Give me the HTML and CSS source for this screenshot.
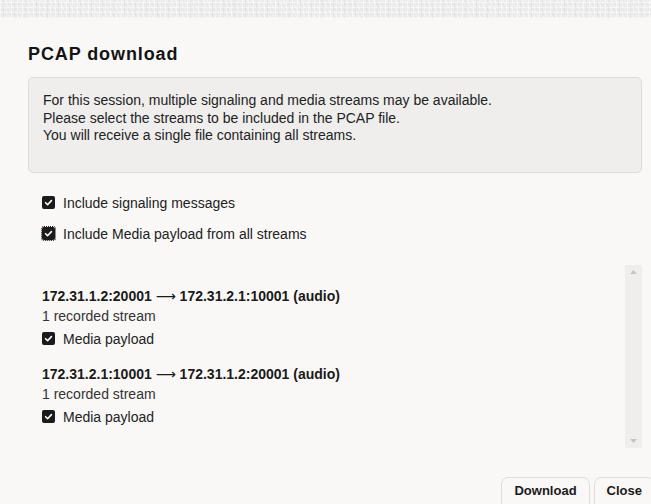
FILE: index.html
```html
<!DOCTYPE html>
<html>
<head>
<meta charset="utf-8">
<link rel="stylesheet" href="styles.css">
</head>
<body>
<div class="backdrop"></div>
<div class="dialog">
  <h1 class="title">PCAP download</h1>
  <div class="info">
    For this session, multiple signaling and media streams may be available.<br>
    Please select the streams to be included in the PCAP file.<br>
    You will receive a single file containing all streams.
  </div>
  <div class="options">
    <label class="check-row">
      <span class="box"><svg viewBox="0 0 13 13" width="13" height="13"><path d="M3.6 6.7 L5.6 8.7 L9.4 4.6" fill="none" stroke="#fff" stroke-width="1.6" stroke-linecap="round" stroke-linejoin="round"/></svg></span>
      <span class="label">Include signaling messages</span>
    </label>
    <label class="check-row">
      <span class="box focused"><svg viewBox="0 0 13 13" width="13" height="13"><path d="M3.6 6.7 L5.6 8.7 L9.4 4.6" fill="none" stroke="#fff" stroke-width="1.6" stroke-linecap="round" stroke-linejoin="round"/></svg></span>
      <span class="label">Include Media payload from all streams</span>
    </label>
  </div>
  <div class="streams">
    <div class="stream-list">
      <div class="stream">
        <div class="stream-title">172.31.1.2:20001 <span class="arrow">⟶</span> 172.31.2.1:10001 (audio)</div>
        <div class="stream-sub">1 recorded stream</div>
        <label class="check-row small">
          <span class="box"><svg viewBox="0 0 13 13" width="13" height="13"><path d="M3.6 6.7 L5.6 8.7 L9.4 4.6" fill="none" stroke="#fff" stroke-width="1.6" stroke-linecap="round" stroke-linejoin="round"/></svg></span>
          <span class="label">Media payload</span>
        </label>
      </div>
      <div class="stream">
        <div class="stream-title">172.31.2.1:10001 <span class="arrow">⟶</span> 172.31.1.2:20001 (audio)</div>
        <div class="stream-sub">1 recorded stream</div>
        <label class="check-row small">
          <span class="box"><svg viewBox="0 0 13 13" width="13" height="13"><path d="M3.6 6.7 L5.6 8.7 L9.4 4.6" fill="none" stroke="#fff" stroke-width="1.6" stroke-linecap="round" stroke-linejoin="round"/></svg></span>
          <span class="label">Media payload</span>
        </label>
      </div>
    </div>
    <div class="scrollbar">
      <svg class="sb-arrow" viewBox="0 0 7 4" width="7" height="4"><polygon points="0,4 3.5,0 7,4" fill="#c4c4c4"/></svg>
      <svg class="sb-arrow" viewBox="0 0 7 4" width="7" height="4"><polygon points="0,0 7,0 3.5,4" fill="#c4c4c4"/></svg>
    </div>
  </div>
  <div class="footer">
    <button class="btn">Download</button>
    <button class="btn">Close</button>
  </div>
</div>
</body>
</html>
```
FILE: styles.css
```css
html, body {
  margin: 0;
  padding: 0;
  height: 100%;
  overflow: hidden;
}
body {
  font-family: "Liberation Sans", Arial, sans-serif;
  color: #1e1e1e;
  background: #f9f8f7;
}
.backdrop {
  height: 18px;
  background:
    repeating-linear-gradient(90deg, rgba(255,255,255,.5) 0 1px, transparent 1px 3px, rgba(0,0,0,.03) 3px 4px, transparent 4px 6px, rgba(255,255,255,.35) 6px 7px, transparent 7px 11px),
    repeating-linear-gradient(0deg, rgba(255,255,255,.35) 0 1px, transparent 1px 3px, rgba(0,0,0,.025) 3px 4px, transparent 4px 5px),
    repeating-linear-gradient(63deg, rgba(255,255,255,.4) 0 1px, transparent 1px 4px),
    #ebebeb;
}
.dialog {
  background: #f9f8f7;
  padding: 25px 9px 0 28px;
}
.title {
  margin: 0 0 12px;
  font-size: 18px;
  line-height: 22px;
  font-weight: bold;
  letter-spacing: 0.9px;
  color: #141414;
}
.info {
  background: #efeeed;
  border: 1px solid #dcdbda;
  border-radius: 5px;
  padding: 14px 15px 27px 14px;
  font-size: 14px;
  line-height: 17.5px;
  color: #222;
}
.options {
  padding-left: 14px;
  margin-top: 20px;
  display: flex;
  flex-direction: column;
  gap: 11px;
}
.check-row {
  display: flex;
  align-items: center;
  height: 20px;
  gap: 8px;
  font-size: 14px;
  color: #222;
}
.box {
  width: 13px;
  height: 13px;
  border-radius: 2px;
  background: #1b1b1b;
  display: flex;
}
.box.focused {
  outline: 1px dotted #222;
  outline-offset: 0;
}
.streams {
  margin-top: 21px;
  height: 183px;
  display: flex;
}
.stream-list {
  flex: 1;
  padding: 21px 0 0 14px;
  display: flex;
  flex-direction: column;
  gap: 15px;
}
.stream-title {
  font-size: 14px;
  line-height: 20px;
  font-weight: bold;
  color: #1a1a1a;
}
.arrow {
  font-weight: normal;
  font-family: "DejaVu Sans", sans-serif;
  font-size: 14px;
}
.stream-sub {
  font-size: 14px;
  line-height: 20px;
  color: #333;
}
.check-row.small {
  margin-top: 3px;
}
.scrollbar {
  width: 17px;
  background: #efeeed;
  display: flex;
  flex-direction: column;
  justify-content: space-between;
  align-items: center;
  padding: 5px 0 5px;
}
.sb-arrow {
  display: block;
}
.footer {
  margin-top: 29px;
  margin-right: -13px;
  display: flex;
  justify-content: flex-end;
  gap: 4px;
}
.btn {
  font-family: "Liberation Sans", Arial, sans-serif;
  font-size: 13px;
  font-weight: bold;
  color: #1a1a1a;
  background: #f9f8f7;
  border: 1px solid #dedddc;
  border-radius: 7px;
  padding: 0 12px 6px;
  height: 34px;
  line-height: 18px;
}
```
